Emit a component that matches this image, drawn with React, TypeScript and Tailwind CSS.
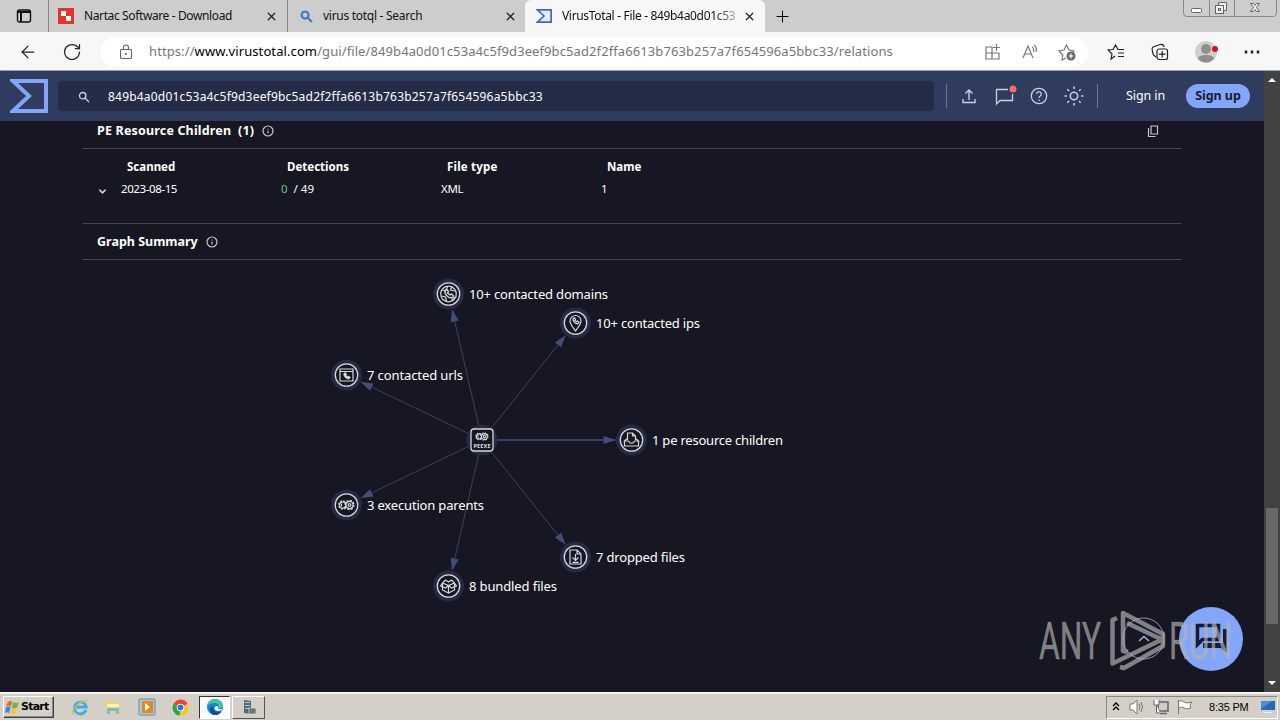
import type { ReactNode } from 'react'
import { ArrowLeft, ChevronDown, Info, Plus, RotateCw, X } from 'lucide-react'

interface GraphNode {
  x: number
  y: number
  label: string
  icon: ReactNode
  width: number
}

const phone = 'M-3-4c-2 3 2 8 6 8l2-2-2-2-1.5 1L-1-1l1-1.5-1.5-2z'

// gear pair shared by the root node and "execution parents"
const gears = (
  <>
    <circle cx="-3.7" r="3.2" />
    <circle cx="-3.7" r="4.1" strokeWidth="1.3" strokeDasharray="1.9 1.3" />
    <circle cx="3" r="3.6" fill="#161723" strokeWidth="1.3" />
    <circle cx="3" r="4.5" strokeWidth="1.3" strokeDasharray="2.1 1.4" />
    <circle cx="3" r="1.4" />
    <path d="M-5-1.500v3" />
  </>
)

const nodes: GraphNode[] = [
  { x: 448.5, y: 294, label: '10+ contacted domains', width: 139, icon: <><circle r="7.8" /><path d="M-6-4l3 1 2-4M3-7l-1 3 4 1M-7 2l4 1 1 4M3 7l2-3 3-1" /><path d={phone} strokeWidth="1.4" /></> },
  { x: 575.5, y: 323, label: '10+ contacted ips', width: 104, icon: <><path d="M0 8C-3 4-5.5 1-5.5-2a5.5 5.5 0 0 1 11 0C5.5 1 3 4 0 8z" /><path d={phone} transform="translate(0 -2) scale(.7)" strokeWidth="1.8" /></> },
  { x: 346.5, y: 375, label: '7 contacted urls', width: 96, icon: <><path d="M-6.5-6h13V6h-13zM-6.5-3.5h13" /><path d={phone} transform="translate(0 1) scale(.75)" fill="#e3e3e9" /></> },
  { x: 631.5, y: 440, label: '1 pe resource children', width: 131, icon: <><path d="M-4-1h-1L-7 1h4l1.500 2h3L3 1h4L5-1H4M-7 1v5H7V1M-4 0v-7h5l3 3v4M1-7v3h3" /></> },
  { x: 346.5, y: 505, label: '3 execution parents', width: 117, icon: gears },
  { x: 575.5, y: 557, label: '7 dropped files', width: 89, icon: <><path d="M-5.5-7h7l4 4V7h-11zM1.5-7v4h4M0-3v6m-3-2.5L0 3.5 3 .5M-3 5.3h6" /></> },
  { x: 448.5, y: 586, label: '8 bundled files', width: 88, icon: <><path d="M-6-3L0-.5 6-3M-6-3V4L0 7l6-3V-3M0 0v7M-6-3l-2 3 5 2 3-2.5L3 2l5-2-2-3M-6-3l3-3 3 2 3-2 3 3" /></> },
]

const root = { x: 482, y: 440 }

function Sigma({ className, color, fill = 'none' }: { className: string; color: string; fill?: string }) {
  return (
    <svg className={className} viewBox="0 0 38 34" preserveAspectRatio="none">
      <path d="M3 2h33v30H3l16-15z" fill={fill} stroke={color} strokeWidth="4" />
    </svg>
  )
}

function Magnifier({ className, color, strokeWidth }: { className: string; color: string; strokeWidth: number }) {
  return (
    <svg className={className} viewBox="0 0 12 12" fill="none" stroke={color} strokeWidth={strokeWidth}>
      <circle cx="4.700" cy="4.700" r="3.200" />
      <path d="M7 7l4 4" />
    </svg>
  )
}

function Tab({ icon, title, className, titleClass }: { icon: ReactNode; title: string; className: string; titleClass: string }) {
  return (
    <div className={`flex h-8 shrink-0 items-center ${className}`}>
      {icon}
      <span className={`overflow-hidden whitespace-nowrap text-[12px] leading-4 text-[#111] ${titleClass}`}>{title}</span>
      <X className="ml-auto size-[13px] shrink-0" strokeWidth={2.3} color="#222" />
    </div>
  )
}

function TabStrip() {
  return (
    <div className="flex h-8 shrink-0 bg-[#cdcdcd]">
      <div className="flex w-12 items-center justify-center">
        <svg className="size-4" viewBox="0 0 16 16" fill="none" stroke="#111" strokeWidth="1.4">
          <rect x="1.5" y="2" width="13" height="12" rx="2" />
          <path d="M2 4h12M5 5v9" strokeWidth="2" />
        </svg>
      </div>
      <Tab
        className="w-[239px] border-l border-[#888] pl-[9px] pr-[9px]"
        titleClass="ml-[10px] tracking-[-0.38px]"
        title="Nartac Software - Download"
        icon={
          <svg className="size-4 shrink-0" viewBox="0 0 16 16">
            <rect width="16" height="16" fill="#e53430" />
            <path d="M3 3h5v5H3zM8 8h5v5H8z" fill="#fff" />
          </svg>
        }
      />
      <Tab
        className="w-[238px] border-l border-[#888] pl-[12px] pr-[8px]"
        titleClass="ml-[10px] tracking-[-0.28px]"
        title="virus totql - Search"
        icon={<Magnifier className="size-[13px] shrink-0" strokeWidth={2} color="#3d7cc4" />}
      />
      <Tab
        className="w-[240px] rounded-t-md bg-[#f7f7f7] pl-[11px] pr-[9px]"
        titleClass="ml-[10px] tracking-[-0.33px] [mask-image:linear-gradient(to_right,#000_88%,#0005)]"
        title="VirusTotal - File - 849b4a0d01c53"
        icon={<Sigma className="h-[14px] w-4 shrink-0" color="#3f66ce" fill="#e4ecff" />}
      />
      <div className="flex w-[34px] items-center justify-center"><Plus className="size-[19px]" strokeWidth={1.3} /></div>
      <svg className="ml-auto mr-[3px] h-[17px] w-[94px]" viewBox="0 0 94 17" fill="none" stroke="#888">
        <path d="M.5-1v14q0 3.500 3.500 3.500h86q3.500 0 3.500-3.500V-1M26.500 0v16M51.500 0v16" />
        <g stroke="#666">
          <rect x="8.500" y="8.500" width="10" height="4" rx="1" fill="#fff" />
          <path d="M35.500 5V2.500h8v8H41" fill="#eee" />
          <rect x="32.500" y="5.500" width="8" height="8" fill="#eee" />
          <rect x="35.500" y="8.500" width="2" height="2" />
          <path d="M67.500 3.500h3l1.500 2 1.500-2h3l-3 4 3 4h-3l-1.500-2-1.500 2h-3l3-4z" fill="#eee" />
        </g>
      </svg>
    </div>
  )
}

function ToolbarIcon({ children, color }: { children: ReactNode; color: string }) {
  return (
    <svg className="size-[18px]" viewBox="0 0 18 18" fill="none" stroke={color} strokeWidth="1.2">
      {children}
    </svg>
  )
}

function Toolbar() {
  return (
    <div className="flex h-[38px] shrink-0 items-center bg-[#f7f7f7] pt-px">
      <ArrowLeft className="ml-[18px] size-5" strokeWidth={1.5} color="#222" />
      <RotateCw className="ml-[24px] size-5" strokeWidth={1.5} color="#222" />
      <div className="ml-[18px] flex h-[30px] w-[988px] items-center rounded-full bg-white">
        <svg className="ml-[20px] h-4 w-3" viewBox="0 0 12 16" fill="none" stroke="#666" strokeWidth="1.1">
          <rect x=".5" y="5.500" width="11" height="9" rx="1" />
          <path d="M3.500 5V3.500a2.500 2.500 0 0 1 5 0V5" />
          <circle cx="6" cy="10" r=".5" />
        </svg>
        <span className="ml-[17px] w-[780px] whitespace-nowrap text-[13px] tracking-[0.095px] text-[#767676]">
          https://<span className="text-black">www.virustotal.com</span>/gui/file/849b4a0d01c53a4c5f9d3eef9bc5ad2f2ffa6613b763b257a7f654596a5bbc33/relations
        </span>
        <div className="ml-auto mr-[12px] flex shrink-0 items-center gap-[19px]">
          <ToolbarIcon color="#777">
            <path d="M2 4h6v12H2zM2 10h13v6H2M8 10h7M12.500 1v7M9 4.500h7" />
          </ToolbarIcon>
          <ToolbarIcon color="#777">
            <path d="M2 15L7 3l5 12M4 11h6M11 4c2 1 2 3 1.500 5M13 2c3 2 3 4 2 7" />
          </ToolbarIcon>
          <ToolbarIcon color="#777">
            <path d="M8 15l-4 2 .8-5L1 8l5-1 2.500-5L11 7l5 1-1 2" />
            <circle cx="13" cy="13" r="4.500" fill="#666" stroke="none" />
            <path d="M13 10.500v5M10.500 13h5" stroke="#fff" />
          </ToolbarIcon>
        </div>
      </div>
      <div className="ml-[19px] flex items-center">
        <ToolbarIcon color="#222">
          <path d="M8 13l-4 3 1-5-4-4 5-.5L8.500 2 11 6.500h6M11 10h6M11 13.500h6" />
        </ToolbarIcon>
        <svg className="ml-[26px] size-[18px]" viewBox="0 0 18 18" fill="none" stroke="#222" strokeWidth="1.2">
          <path d="M5 14L2.500 12Q0 5 2 4l7-2.500Q13 1 13 4" />
          <rect x="6" y="6" width="10.500" height="10.500" rx="2" />
          <path d="M11.200 8v6.500M8 11.200h6.500" />
        </svg>
        <svg className="ml-[25px] size-6" viewBox="0 0 24 24">
          <circle cx="12" cy="12" r="11" fill="#d1d0ce" />
          <circle cx="12" cy="9" r="5" fill="#918f8c" />
          <path d="M4 19q0-4 8-4t8 4q-8 7-16 0" fill="#918f8c" />
          <circle cx="21" cy="9" r="3" fill="#e20b20" />
        </svg>
        <svg className="ml-[26px] h-1 w-4" viewBox="0 0 16 4"><path d="M2 .5v3M8 .5v3M14 .5v3" stroke="#222" strokeWidth="2.500" /></svg>
      </div>
    </div>
  )
}

function SiteHeader() {
  return (
    <header className="flex h-[50px] items-center bg-[#303c5e]">
      <Sigma className="ml-[10px] h-[34px] w-[38px]" color="#83a5fa" />
      <div className="ml-[10px] flex h-[30px] w-[876px] items-center rounded bg-[#252c47] text-white">
        <Magnifier className="ml-[20px] mt-[2px] size-3" strokeWidth={1.3} color="#c9cedb" />
        <span className="ml-[18px] mt-px text-[12px] tracking-[0.2px]">849b4a0d01c53a4c5f9d3eef9bc5ad2f2ffa6613b763b257a7f654596a5bbc33</span>
      </div>
      <div className="ml-[12px] h-6 w-px bg-[#6b7696]" />
      <svg className="ml-[13px] size-[18px]" viewBox="0 0 18 18" fill="none" stroke="#c8d0e5" strokeWidth="1.400">
        <path d="M9 13V3M5.500 6.500L9 3l3.500 3.500M3 12v3.500h12V12" />
      </svg>
      <svg className="ml-[15px] h-[22px] w-6" viewBox="0 0 24 22" fill="none" stroke="#c8d0e5" strokeWidth="1.300">
        <path d="M19.500 9v6.500H7L3.500 19V4.500H15" />
        <circle cx="20" cy="4" r="3.500" fill="#f66b72" stroke="none" />
      </svg>
      <svg className="ml-[13px] size-[18px]" viewBox="0 0 18 18" fill="none" stroke="#c8d0e5" strokeWidth="1.300">
        <circle cx="9" cy="9" r="7.700" />
        <path d="M6.700 7a2.300 2.300 0 1 1 3.500 2Q9 9.500 9 11M9 12.500V14" />
      </svg>
      <svg className="ml-[16px] size-5" viewBox="0 0 20 20" fill="none" stroke="#c8d0e5" strokeWidth="1.500">
        <circle cx="10" cy="10" r="3.700" />
        <path d="M10 .5V3M10 17v2.500M.5 10H3M17 10h2.500M3.300 3.300L5 5M15 15l1.700 1.700M3.300 16.700L5 15M15 5l1.700-1.700" />
      </svg>
      <div className="ml-[13px] h-6 w-px bg-[#6b7696]" />
      <span className="ml-[28px] mt-px w-[39px] whitespace-nowrap text-[12.500px] tracking-[-0.1px] text-white">Sign in</span>
      <button className="ml-[21px] h-6 w-16 rounded-full bg-[#83a5fa] pt-px text-[12.500px] font-bold tracking-[-0.05px] text-[#171c30]">Sign up</button>
    </header>
  )
}

function Relations() {
  return (
    <section className="ml-[83px] w-[1098px] text-[11.500px] text-white">
      <div className="flex h-7 items-center border-b border-[#43465b] px-[14px] pb-[8px] text-[12.500px] font-bold">
        <span className="whitespace-pre pt-[2px] tracking-[0.17px]">PE Resource Children  (1)</span>
        <Info className="ml-[8px] size-3" strokeWidth={2.4} color="#c4c6d0" />
        <svg className="ml-auto mr-[8px] size-3" viewBox="0 0 12 12" fill="none" stroke="#c4c6d0" strokeWidth="1.200">
          <path d="M4 1h6.500v8H4zM1.500 3v8.500h7" />
        </svg>
      </div>
      <div className="h-[75px] border-b border-[#43465b] pt-[8px]">
        <div className="grid h-5 grid-cols-[160px_160px_160px_160px] items-center pl-[44px] font-bold">
          <span>Scanned</span><span>Detections</span><span className="tracking-[0.2px]">File type</span><span>Name</span>
        </div>
        <div className="grid h-6 grid-cols-[24px_160px_160px_160px_160px] items-center pl-[14px]">
          <ChevronDown className="mt-[5px] size-[11px]" strokeWidth={3.3} color="#d2d3dc" />
          <span className="tracking-[-0.4px]">2023-08-15</span>
          <span><span className="text-[#5ac78d]">0</span><span className="ml-[6px]">/ 49</span></span>
          <span className="tracking-[-0.3px]">XML</span>
          <span>1</span>
        </div>
      </div>
      <div className="flex h-9 items-center border-b border-[#43465b] px-[14px] text-[12.500px] font-bold">
        <span className="pt-[2px]">Graph Summary</span>
        <Info className="ml-[8px] size-3" strokeWidth={2.4} color="#c4c6d0" />
      </div>
    </section>
  )
}

function Graph() {
  return (
    <svg className="block h-[432px] w-[1264px]" viewBox="0 260 1264 432">
      {nodes.map(n => {
        const angle = Math.atan2(n.y - root.y, n.x - root.x)
        const tipX = n.x - Math.cos(angle) * 16
        const tipY = n.y - Math.sin(angle) * 16
        return (
          <g key={n.label}>
            <path d={`M${root.x} ${root.y}L${tipX} ${tipY}`} stroke="#3c4260" strokeWidth={n.y === root.y ? 1.8 : 1} />
            <path d="M0 0l-12-4v8z" fill="#424f7b" transform={`translate(${tipX} ${tipY}) rotate(${(angle * 180) / Math.PI})`} />
          </g>
        )
      })}
      {nodes.map(n => (
        <g key={n.label} transform={`translate(${n.x} ${n.y})`}>
          <circle r="15.500" fill="#252b42" />
          <circle r="11.200" fill="#161723" stroke="#d6d6de" strokeWidth="1.300" />
          <g fill="none" stroke="#d6d6de" strokeWidth="1.200">{n.icon}</g>
          <text x="20.500" y="4.700" fill="#fff" fontSize="13" textLength={n.width}>{n.label}</text>
        </g>
      ))}
      <g transform={`translate(${root.x} ${root.y})`}>
        <circle r="15.500" fill="#252b42" />
        <rect x="-11" y="-11" width="22" height="22" rx="3" fill="#161723" stroke="#d6d6de" strokeWidth="1.300" />
        <g transform="translate(0 -3.500) scale(.8)" fill="none" stroke="#dedee6" strokeWidth="1.300">{gears}</g>
        <text y="7.700" textAnchor="middle" fill="#dedee6" fontSize="5.500" fontWeight="700" textLength="17">PEEXE</text>
      </g>
    </svg>
  )
}

function FloatingActions() {
  return (
    <svg className="absolute left-[1030px] top-[600px] h-20 w-[220px]" viewBox="1030 600 220 80" fill="none">
      <circle cx="1211" cy="639" r="32" fill="#83a5fa" />
      <path d="M1197.500 625.500h21v14h-16l-5 5z" stroke="#171c30" strokeWidth="3.500" />
      <path d="M1223 629h4v24l-6-5h-18v-5h20z" fill="#171c30" />
      <circle cx="1143.500" cy="638.500" r="20.500" fill="#161723" stroke="#8b95ce" />
      <path d="M1139 641l5-4.500 5 4.500" stroke="#a3b0e0" strokeWidth="1.500" />
      <g className="font-['Roboto']" fill="#b4b4b4" fillOpacity=".68" stroke="#b4b4b4" strokeOpacity=".5" strokeWidth=".6" fontSize="52">
        <text x="1039" y="659" textLength="62" lengthAdjust="spacingAndGlyphs">ANY</text>
        <text x="1169" y="659" textLength="63" lengthAdjust="spacingAndGlyphs">RUN</text>
      </g>
      {/* play mark: two interlocked open triangles */}
      <path
        d="M1117 618l-4.500 2v43.500L1161 640M1128 652l-5-1v-38l40 21v6l-36-17M1120 667l4 1 39-22v-6"
        stroke="#b4b4b4" strokeOpacity=".68" strokeWidth="4.500" strokeLinejoin="round"
      />
    </svg>
  )
}

function Taskbar() {
  return (
    <footer className="flex h-7 shrink-0 items-center border-t-2 border-[#f6f3ec] bg-[#d4d0c8] font-['Liberation_Sans'] text-black">
      <button className="ml-[3px] flex h-[22px] w-[51px] items-center border border-b-[#404040] border-l-white border-r-[#404040] border-t-white shadow-[inset_-1px_-1px_#888]">
        <svg className="ml-px size-[15px] shrink-0" viewBox="0 0 16 16">
          <path d="M3 2q3-2 5 0L6 7Q4 5 1 7z" fill="#ec6b2c" />
          <path d="M9 2q3 2 6 0l-2 6q-3 2-6 0z" fill="#71b944" />
          <path d="M1 8q3-2 5 0l-2 6q-2-2-4 0z" fill="#3b86d4" />
          <path d="M7 9q3 2 6 0l-2 5q-3 2-6 0z" fill="#f5c63b" />
        </svg>
        <span className="ml-px font-['DejaVu_Sans'] text-[11px] font-bold tracking-[-0.75px]">Start</span>
      </button>
      <svg className="ml-[17px] size-[18px]" viewBox="0 0 18 18" fill="none">
        <path d="M15 12q-2 4-6 4a6 6 0 1 1 6.300-7H5" stroke="#42ace5" strokeWidth="2.800" />
        <path d="M2 16C-1 12 12 0 17 3" stroke="#e9b93c" strokeWidth="1.300" />
      </svg>
      <svg className="ml-[15px] size-[18px]" viewBox="0 0 18 18">
        <path d="M2 3h6l1 2h7v10H2z" fill="#f4d36b" />
        <path d="M3 6h12v3H3z" fill="#fff2b5" />
        <path d="M3 10h12v6h-3v-3H6v3H3z" fill="#79b9df" />
      </svg>
      <svg className="ml-4 size-[18px]" viewBox="0 0 18 18">
        <rect x="1" y="1" width="16" height="16" rx="1" fill="#a8c8df" stroke="#5592bd" />
        <rect x="4" y="3" width="11" height="12" fill="#ef8618" />
        <path d="M7 5l5 4-5 4z" fill="#fff" />
      </svg>
      <svg className="ml-4 size-[17px]" viewBox="0 0 18 18">
        <circle cx="9" cy="9" r="8.500" fill="#fbc424" />
        <path d="M9 9L1.600 5Q5 .5 9 .5 14 .5 16.500 5z" fill="#e84335" />
        <path d="M1.600 5L9 9 8 17.500A8.500 8.500 0 0 1 1.600 5" fill="#2da24f" />
        <circle cx="9" cy="9" r="4" fill="#fff" />
        <circle cx="9" cy="9" r="3.100" fill="#2876e8" />
      </svg>
      <div className="ml-[10px] flex h-[23px] w-[31px] items-center justify-center border border-b-white border-l-[#333] border-r-white border-t-[#333] bg-[#fafafa]">
        <svg className="size-4" viewBox="0 0 16 16">
          <circle cx="8" cy="8" r="8" fill="#1684ce" />
          <path d="M0 7Q2-1 10 .2c5 1 6 5 6 6q-1 4-5 3Q13 5 8 4 3 4 0 7" fill="#42c6a4" />
          <path d="M6 7q-1 6 8 6-4 5-9 2-5-5 1-8" fill="#104e97" />
          <path d="M9 7c-3 2-1 5 2 5l4-1v-1q-5 1-4-1 1-2-2-2" fill="#fafafa" />
        </svg>
      </div>
      <div className="ml-[2px] flex h-[23px] w-[33px] items-center justify-center border border-b-[#555] border-l-white border-r-[#555] border-t-white">
        <svg className="size-4" viewBox="0 0 16 16">
          <path d="M3 1l7 1v13l-7-1z" fill="#536777" />
          <path d="M4 3.500h5M4 6.500h5M4 9.500h5" stroke="#bac8cf" />
          <rect x="8" y="9" width="7" height="6" fill="#69747c" stroke="#ddd" strokeWidth=".7" />
        </svg>
      </div>
      <div className="ml-auto mr-[2px] flex h-[23px] w-[172px] items-center border border-b-white border-l-[#888] border-r-white border-t-[#888]">
        <svg className="ml-[5px] h-[10px] w-2" viewBox="0 0 8 10" fill="none" stroke="#000" strokeWidth="1.300"><path d="M1 4l3-3 3 3M1 8l3-3 3 3" /></svg>
        <svg className="ml-[9px] size-4" viewBox="0 0 16 16" fill="none" stroke="#777">
          <path d="M1 5h3l4-4v14l-4-4H1z" fill="#fff" /><path d="M10 5q2 3 0 6M12 3q3 5 0 10" />
        </svg>
        <svg className="ml-[8px] size-4" viewBox="0 0 16 16" fill="none" stroke="#666">
          <path d="M5 3h10v9H5zM7 14.500h7" fill="#ccc" strokeWidth="1.500" /><path d="M1 1v5h5V1M3.500 6v8H7" fill="#fff" />
        </svg>
        <svg className="ml-[8px] size-4" viewBox="0 0 16 16" fill="none" stroke="#777">
          <path d="M1.500 1v14M2 2q3-1 5 1t8 0l-2 3 1 3q-5 2-7 0T2 9" fill="#fff" />
        </svg>
        <span className="ml-[16px] w-[39px] whitespace-nowrap text-[11px] tracking-[-0.2px]">8:35 PM</span>
        <svg className="ml-[12px] h-[14px] w-4 shrink-0" viewBox="0 0 16 14">
          <rect x=".5" y=".5" width="15" height="10" fill="#2869b2" stroke="#bcd2e6" /><path d="M1 9L12 1H1z" fill="#538ccc" /><path d="M3 12.500h9" stroke="#eee" />
        </svg>
      </div>
    </footer>
  )
}

export default function App() {
  return (
    <div className="flex h-[720px] w-[1280px] flex-col overflow-hidden bg-[#161723] font-['Noto_Sans',sans-serif]">
      <TabStrip />
      <Toolbar />
      <div className="flex h-[622px] shrink-0 border-t border-[#93a0b8]">
        <main className="w-[1264px] overflow-hidden bg-[#161723]">
          <SiteHeader />
          <Relations />
          <Graph />
        </main>
        <div className="flex w-4 flex-col items-center bg-[#424242]">
          <svg className="mt-[6px] h-1.5 w-2" viewBox="0 0 8 6"><path d="M0 5l4-4 4 4z" fill="#fff" /></svg>
          <div className="mt-[425px] h-[116px] w-3 bg-[#686868]" />
          <svg className="mt-auto mb-[6px] h-1.5 w-2" viewBox="0 0 8 6"><path d="M0 1l4 4 4-4z" fill="#fff" /></svg>
        </div>
      </div>
      <FloatingActions />
      <Taskbar />
    </div>
  )
}
